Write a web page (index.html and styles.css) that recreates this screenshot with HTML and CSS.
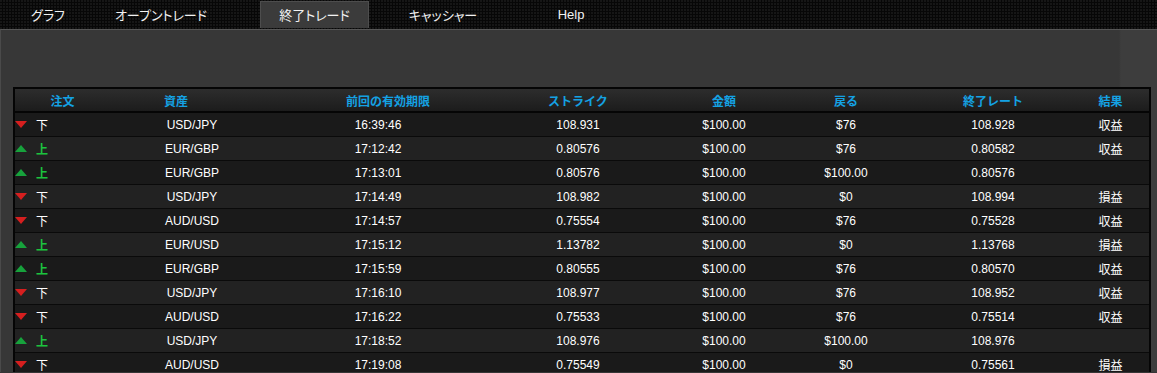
FILE: index.html
```html
<!DOCTYPE html>
<html lang="ja">
<head>
<meta charset="utf-8">
<title>終了トレード</title>
<link rel="stylesheet" href="styles.css">
</head>
<body>
<nav class="nav">
  <a class="tab w1">グラフ</a>
  <a class="tab w2">オープントレード</a>
  <a class="tab active">終了トレード</a>
  <a class="tab w4">キャッシャー</a>
  <a class="tab w5 latin">Help</a>
</nav>
<main class="content">
  <div class="table">
    <div class="row head">
      <div class="c c1">注文</div>
      <div class="c c2 h2">資産</div>
      <div class="c c3 h3">前回の有効期限</div>
      <div class="c c4">ストライク</div>
      <div class="c c5">金額</div>
      <div class="c c6">戻る</div>
      <div class="c c7">終了レート</div>
      <div class="c c8">結果</div>
    </div>
    <div class="row"><div class="c c1"><span class="tri down"></span><span class="dir">下</span></div><div class="c c2">USD/JPY</div><div class="c c3">16:39:46</div><div class="c c4">108.931</div><div class="c c5">$100.00</div><div class="c c6">$76</div><div class="c c7">108.928</div><div class="c c8">収益</div></div>
    <div class="row"><div class="c c1"><span class="tri up"></span><span class="dir green">上</span></div><div class="c c2">EUR/GBP</div><div class="c c3">17:12:42</div><div class="c c4">0.80576</div><div class="c c5">$100.00</div><div class="c c6">$76</div><div class="c c7">0.80582</div><div class="c c8">収益</div></div>
    <div class="row"><div class="c c1"><span class="tri up"></span><span class="dir green">上</span></div><div class="c c2">EUR/GBP</div><div class="c c3">17:13:01</div><div class="c c4">0.80576</div><div class="c c5">$100.00</div><div class="c c6">$100.00</div><div class="c c7">0.80576</div><div class="c c8"></div></div>
    <div class="row"><div class="c c1"><span class="tri down"></span><span class="dir">下</span></div><div class="c c2">USD/JPY</div><div class="c c3">17:14:49</div><div class="c c4">108.982</div><div class="c c5">$100.00</div><div class="c c6">$0</div><div class="c c7">108.994</div><div class="c c8">損益</div></div>
    <div class="row"><div class="c c1"><span class="tri down"></span><span class="dir">下</span></div><div class="c c2">AUD/USD</div><div class="c c3">17:14:57</div><div class="c c4">0.75554</div><div class="c c5">$100.00</div><div class="c c6">$76</div><div class="c c7">0.75528</div><div class="c c8">収益</div></div>
    <div class="row"><div class="c c1"><span class="tri up"></span><span class="dir green">上</span></div><div class="c c2">EUR/USD</div><div class="c c3">17:15:12</div><div class="c c4">1.13782</div><div class="c c5">$100.00</div><div class="c c6">$0</div><div class="c c7">1.13768</div><div class="c c8">損益</div></div>
    <div class="row"><div class="c c1"><span class="tri up"></span><span class="dir green">上</span></div><div class="c c2">EUR/GBP</div><div class="c c3">17:15:59</div><div class="c c4">0.80555</div><div class="c c5">$100.00</div><div class="c c6">$76</div><div class="c c7">0.80570</div><div class="c c8">収益</div></div>
    <div class="row"><div class="c c1"><span class="tri down"></span><span class="dir">下</span></div><div class="c c2">USD/JPY</div><div class="c c3">17:16:10</div><div class="c c4">108.977</div><div class="c c5">$100.00</div><div class="c c6">$76</div><div class="c c7">108.952</div><div class="c c8">収益</div></div>
    <div class="row"><div class="c c1"><span class="tri down"></span><span class="dir">下</span></div><div class="c c2">AUD/USD</div><div class="c c3">17:16:22</div><div class="c c4">0.75533</div><div class="c c5">$100.00</div><div class="c c6">$76</div><div class="c c7">0.75514</div><div class="c c8">収益</div></div>
    <div class="row"><div class="c c1"><span class="tri up"></span><span class="dir green">上</span></div><div class="c c2">USD/JPY</div><div class="c c3">17:18:52</div><div class="c c4">108.976</div><div class="c c5">$100.00</div><div class="c c6">$100.00</div><div class="c c7">108.976</div><div class="c c8"></div></div>
    <div class="row"><div class="c c1"><span class="tri down"></span><span class="dir">下</span></div><div class="c c2">AUD/USD</div><div class="c c3">17:19:08</div><div class="c c4">0.75549</div><div class="c c5">$100.00</div><div class="c c6">$0</div><div class="c c7">0.75561</div><div class="c c8">損益</div></div>
  </div>
</main>
</body>
</html>
```
FILE: styles.css
```css
html, body {
  margin: 0;
  padding: 0;
  background: #363636;
  overflow: hidden;
}
body {
  font-family: "Liberation Sans", Arial, "Noto Sans CJK JP", sans-serif;
  font-size: 12px;
  color: #fff;
}
.nav {
  display: flex;
  align-items: flex-end;
  height: 29px;
  background-color: #070707;
  background-image: radial-gradient(circle at 1px 1px, #161616 0.8px, transparent 1.2px);
  background-size: 3px 3px;
  font-feature-settings: "palt";
}
.tab {
  display: flex;
  align-items: center;
  justify-content: center;
  height: 29px;
  font-size: 13px;
  color: #f2f2f2;
  box-sizing: border-box;
  padding-bottom: 1px;
}
.latin { font-size: 13px; }
.w1 { width: 96px; }
.w2 { width: 130px; }
.w4 { width: 148px; }
.w5 { width: 108px; }
.active {
  width: 109px;
  height: 27px;
  margin: 0 0 1px 34px;
  background: #3b3b3b;
  border: 1px solid #4d4d4d;
  border-bottom: none;
}
.content {
  height: 343px;
  border-top: 1px solid #565656;
  border-left: 1px solid #4a4a4a;
  box-sizing: border-box;
  padding: 57px 0 0 12px;
  background-color: #373737;
  background-image: linear-gradient(90deg, transparent 0, transparent 1118px, #3d3d3d 1120px, #3d3d3d 100%);
}
.table {
  width: 1134px;
  border: 2px solid #050505;
  border-bottom: none;
  background: #111;
}
.row {
  display: grid;
  grid-template-columns: 95px 164px 208px 192px 100px 144px 150px 77px;
  height: 23px;
  border-bottom: 1px solid #0a0a0a;
  background: #1a1a1a;
}
.row:nth-child(odd) { background: #222; }
.row.head {
  height: 22px;
  border-bottom: 2px solid #050505;
  background: linear-gradient(#2d2d2d, #1c1c1c);
  color: #14a2e4;
  font-weight: bold;
}
.c {
  display: flex;
  align-items: center;
  justify-content: center;
  white-space: nowrap;
}
.c1 { justify-content: flex-start; }
.head .c1 { justify-content: center; }
.head .h2 { padding-right: 32px; }
.head .h3 { padding-left: 20px; }
.c8 { padding-left: 8px; }
.tri {
  width: 0;
  height: 0;
  margin: 0 9px 0 0;
  border-left: 6px solid transparent;
  border-right: 6px solid transparent;
}
.tri.down { border-top: 7px solid #d61f1f; }
.tri.up { border-bottom: 7px solid #17a23c; }
.dir { font-size: 12px; }
.dir.green { color: #1cc23e; font-weight: bold; }
```
